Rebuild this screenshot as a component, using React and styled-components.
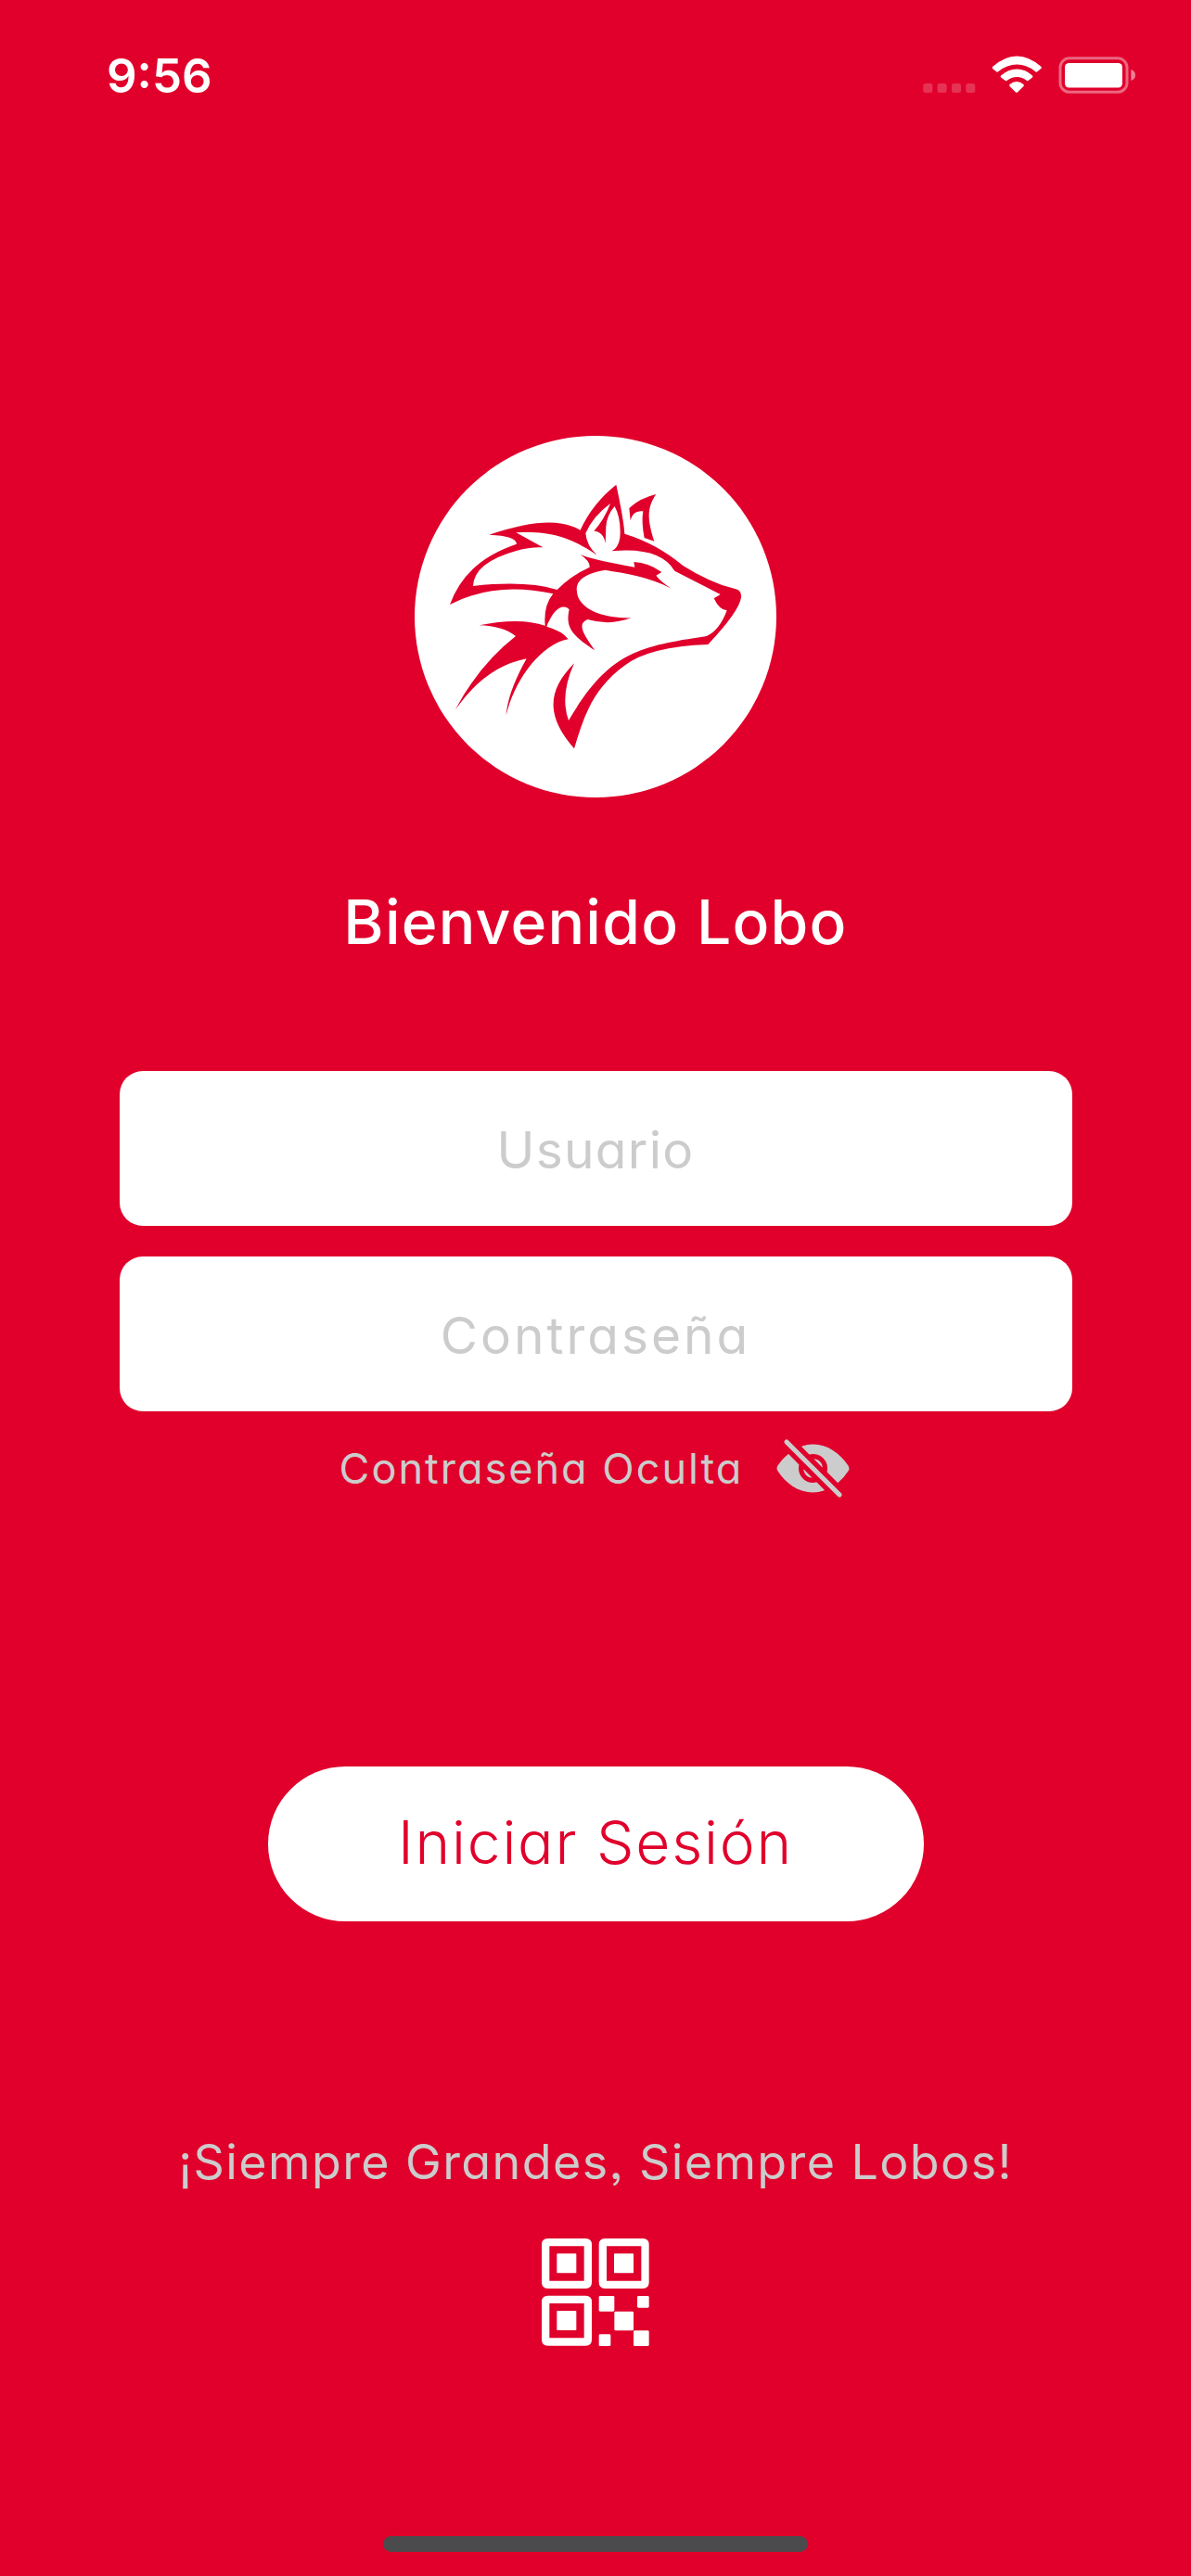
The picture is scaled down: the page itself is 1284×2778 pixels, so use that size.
import React, { useState } from "react";
import styled, { createGlobalStyle } from "styled-components";
import { IoEyeOff } from "react-icons/io5";

const GlobalStyle = createGlobalStyle`
  body {
    margin: 0;
    background-color: #e0002b;
  }
`;

const Container = styled.div`
  width: 1284px;
  height: 2778px;
  box-sizing: border-box;
  overflow: hidden;
  display: flex;
  flex-direction: column;
  align-items: center;
  background-color: #e0002b;
  font-family: "Inter", "Open Sans", sans-serif;
  font-feature-settings: "cv11", "ss03";
`;

const StatusBar = styled.header`
  width: 100%;
  height: 160px;
  box-sizing: border-box;
  padding: 0 59px 0 115px;
  display: flex;
  align-items: center;
  justify-content: space-between;
  color: white;
`;

const Time = styled.span`
  padding-top: 3px;
  font-size: 51px;
  font-weight: 600;
`;

const Indicators = styled.svg`
  width: 230px;
  height: 42px;
`;

const Logo = styled.svg`
  width: 404px;
  height: 404px;
  margin-top: 300px;
`;

const Text = styled.p`
  margin: ${(props) => props.$margin || "0"};
  font-size: ${(props) => props.$size}px;
  font-weight: ${(props) => props.$weight || 400};
  letter-spacing: ${(props) => props.$spacing || 0}px;
  line-height: 80px;
  white-space: nowrap;
  color: ${(props) => props.$color || "#cccccc"};
`;

const Form = styled.form`
  width: 1027px;
  margin-top: 121px;
  display: flex;
  flex-direction: column;
  align-items: center;
`;

const Input = styled.input`
  width: 100%;
  height: 167px;
  box-sizing: border-box;
  margin-bottom: ${(props) => props.$gap}px;
  padding: 2px 40px 0;
  border: none;
  border-radius: 25px;
  background-color: white;
  color: #333333;
  font: inherit;
  font-feature-settings: inherit;
  font-size: 55px;
  letter-spacing: ${(props) => props.$spacing || 0}px;
  text-align: center;
  &::placeholder {
    color: #cccccc;
    opacity: 1;
  }
`;

const Toggle = styled.div`
  display: flex;
  align-items: center;
  gap: 34px;
  color: #cccccc;
  cursor: pointer;
`;

const Button = styled.button`
  width: 707px;
  height: 167px;
  margin-top: 280px;
  padding: 0 0 4px;
  border: none;
  border-radius: 84px;
  background-color: white;
  color: #e0002b;
  font: inherit;
  font-feature-settings: inherit;
  font-size: 64px;
  font-weight: 300;
  letter-spacing: 1.8px;
  cursor: pointer;
`;

const QrIcon = styled.svg`
  width: 116px;
  height: 116px;
  margin-top: 42px;
`;

const HomeBar = styled.div`
  width: 458px;
  height: 17px;
  margin-top: auto;
  margin-bottom: 26px;
  border-radius: 9px;
  background-color: #4b4b4d;
`;

const WolfLogo = () => (
  <Logo viewBox="0 0 1212 1212">
    <circle cx="606" cy="615" r="585" fill="white" />
    <g fill="#e0002b">
      <path d="M262 350Q440 290 525 321Q545 327 557 335Q595 250 673 188Q697 300 700 347Q805 379 889 450Q975 505 1060 526Q1079 531 1077 553Q1071 598 970 705Q780 712 700 773C595 850 568 940 537 1042C440 930 455 850 537 766Q490 870 519 951C645 738 735 712 962 679Q1005 664 1031 595Q1007 594 989 556L1010 543L862 467Q815 388 659 403Q680 392 685 360Q690 300 668 258Q642 287 640 324L638 378Q632 340 601 338Q635 300 654 249Q597 291 574 345Q577 385 611 416C510 347 440 339 349 343L436 391Q395 389 350 402Q213 440 210 516Q380 497 482 528Q525 483 587 455Q589 436 557 414Q595 431 733 455L730 438Q777 440 820 471L802 482Q815 500 851 524C780 485 700 475 638 464C555 478 536 507 549 550C570 602 648 621 721 619Q655 645 580 624C548 638 562 665 604 724C530 675 508 650 521 592C510 580 480 570 448 647Q500 662 518 688C425 705 340 830 317 935Q322 860 383 751Q250 776 152 917Q230 770 348 678Q305 645 230 643Q360 616 443 644Q437 580 469 541Q280 500 135 576Q185 435 351 380Q350 353 262 350Z" />
      <path d="M715 264Q750 231 802 219C770 265 775 305 796 371L764 360Q754 310 760 274Q727 269 719 304Z" />
    </g>
  </Logo>
);

const StatusIcons = () => (
  <Indicators viewBox="0 0 230 42">
    <g fill="white" fillOpacity="0.2">
      <rect x="0.3" y="31" width="10" height="10" rx="2.5" />
      <rect x="15.6" y="31" width="10" height="10" rx="2.5" />
      <rect x="31" y="31" width="10" height="10" rx="2.5" />
      <rect x="46.3" y="31" width="10" height="10" rx="2.5" />
    </g>
    <g fill="white">
      <path d="M75 13Q88 1.5 101.3 1.5T127.6 13Q128.3 14 127.3 15L123 18.5Q122 19 121 18Q112 10.5 101.3 10.5T81.5 18Q80.5 19 79.5 18.5L75 15Q74.3 14 75 13Z" />
      <path d="M84 22.5Q92 15.5 101.3 15.5T118 22.5Q119 23.5 118 24.5L113.5 28Q112.7 28.5 112 28Q107 24 101.3 24T90.5 28Q89.7 28.5 89 28L84 24.5Q83.2 23.5 84 22.5Z" />
      <path d="M93.5 32Q97 29 101 29T108.5 32Q109.3 33 108.5 34L102 40.5Q101 41.2 100 40.5L93.5 34Q92.7 33 93.5 32Z" />
    </g>
    <rect x="148" y="3.8" width="72" height="36.5" rx="10" fill="none" stroke="white" strokeOpacity="0.4" strokeWidth="3" />
    <rect x="153" y="9" width="62" height="26.5" rx="4.5" fill="white" />
    <path d="M224.3 16Q229 17.5 229 22T224.3 28Z" fill="white" fillOpacity="0.5" />
  </Indicators>
);

const QrFinder = ({ x, y }) => (
  <g transform={`translate(${x} ${y})`}>
    <path
      fillRule="evenodd"
      d="M20 0H142Q162 0 162 20V142Q162 162 142 162H20Q0 162 0 142V20Q0 0 20 0ZM25 25V137H137V25Z"
    />
    <rect x="49" y="49" width="63" height="63" rx="2" />
  </g>
);

const QrCode = () => (
  <QrIcon viewBox="0 0 348 348" fill="white">
    <QrFinder x={0} y={0} />
    <QrFinder x={185} y={0} />
    <QrFinder x={0} y={185} />
    <rect x="185" y="186" width="50" height="50" rx="4" />
    <rect x="309" y="186" width="38" height="38" rx="4" />
    <rect x="235" y="236" width="62" height="62" rx="4" />
    <rect x="297" y="298" width="50" height="50" rx="4" />
    <rect x="185" y="310" width="38" height="38" rx="4" />
  </QrIcon>
);

const App = () => {
  const [username, setUserName] = useState("");
  const [password, setUserPassword] = useState("");
  const handleLogin = (e) => {
    e.preventDefault();
  };
  return (
    <>
      <GlobalStyle />
      <Container>
        <StatusBar>
          <Time>9:56</Time>
          <StatusIcons />
        </StatusBar>
        <WolfLogo />
        <Text $size={66} $weight={500} $spacing={1.2} $color='white' $margin='90px 0 0'>
          Bienvenido Lobo
        </Text>
        <Form>
          <Input
            placeholder='Usuario'
            value={username}
            onChange={(e) => setUserName(e.target.value)}
            $gap={33}
            $spacing={1.3}
          />
          <Input
            placeholder='Contraseña'
            value={password}
            onChange={(e) => setUserPassword(e.target.value)}
            $gap={20}
            $spacing={3}
          />
          <Toggle>
            <Text $size={45} $spacing={2}>Contraseña Oculta</Text>
            <IoEyeOff size={83} />
          </Toggle>
          <Button onClick={handleLogin}>Iniciar Sesión</Button>
        </Form>
        <Text $size={52} $spacing={1.4} $margin='220px 0 0'>
          ¡Siempre Grandes, Siempre Lobos!
        </Text>
        <QrCode />
        <HomeBar />
      </Container>
    </>
  );
};

export default App;
